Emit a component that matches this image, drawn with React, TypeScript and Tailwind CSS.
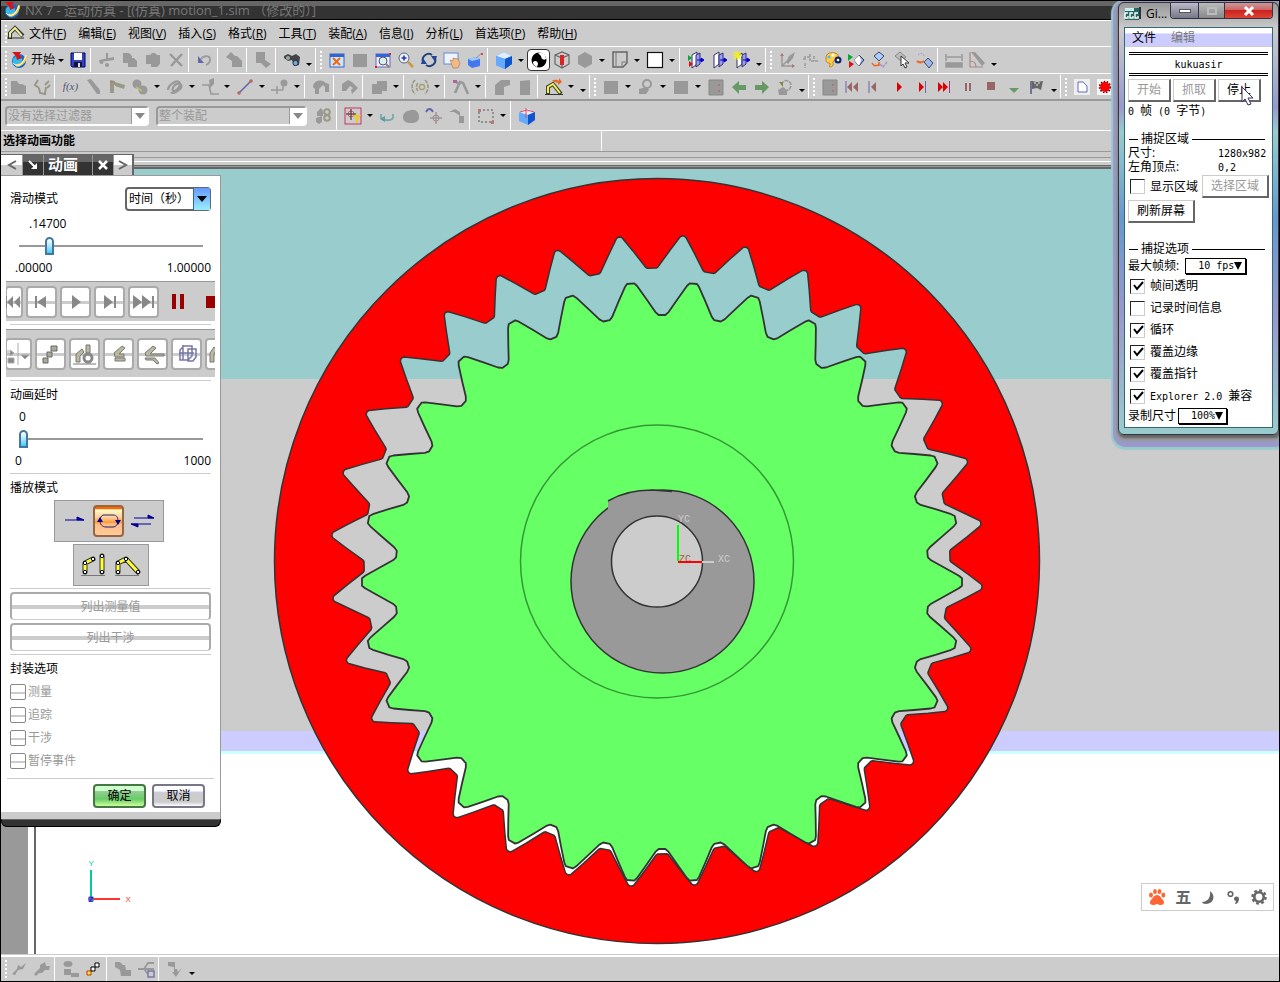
import React, { ReactNode } from "react";

const G = "#999999";

const icons: Record<string, ReactNode> = {
  nx: (
    <>
      <circle cx="9" cy="10" r="7" fill="#1a66cc" />
      <path d="M3 8c2-4 8-4 9 0s-1 6-3 8c-4 0-7-4-6-8z" fill="#33bbee" />
      <path d="M6 14c4 1 9-2 10-9" stroke="#ffcc33" strokeWidth="2.4" fill="none" />
      <path d="M3 12c2 3 7 3 9 0s4-6 4-8" stroke="#ffffff" strokeWidth="1" fill="none" />
      <path d="M2 1l9 0-2 3 3 3-5 2-1-4z" fill="#dd1111" />
    </>
  ),
  save: (
    <>
      <path d="M2 2h14v14H3l-1-1z" fill="#3344bb" stroke="#000066" />
      <rect x="5" y="2" width="8" height="7" fill="#fff" />
      <rect x="5" y="11" width="8" height="5" fill="#111144" />
      <rect x="9" y="12" width="2" height="4" fill="#ddd" />
    </>
  ),
  cut: (
    <>
      <path d="M1 9l15-3v3L2 11zM8 2h2v8H8z" fill={G} />
      <circle cx="3.500" cy="11" r="2" fill={G} />
      <circle cx="9" cy="14" r="2" fill={G} />
    </>
  ),
  copy: <path d="M2 2h6l3 3v2h2l3 3v6H7v-4H2z" fill={G} />,
  paste: <path d="M2 4h4l2-2h3l2 2h3v9l-3 3H7v-3H2z" fill={G} />,
  del: <path d="M3 3l12 12M15 3L4 15" stroke={G} strokeWidth="2.4" />,
  undo: (
    <>
      <path d="M5 8c3-4 9-4 9 1 0 3-2 4-4 5" stroke={G} strokeWidth="1.8" fill="none" />
      <path d="M2 5v7h6z" fill="#6666aa" />
    </>
  ),
  box1: <path d="M1 6l5-5 4 4h2l5 5v6H7v-6z" fill={G} />,
  box2: <path d="M2 1h9v8l6 4-5 4-5-5H2z" fill={G} />,
  bino: (
    <>
      <path d="M1 5l4-2 4 2 4-2 4 3-1 8-5 1-2-6-4 1-4-3z" fill="#444" />
      <circle cx="5" cy="7" r="2" fill="#99aaaa" />
      <circle cx="12.500" cy="12" r="2.600" fill="#77aacc" stroke="#223355" />
    </>
  ),
  fit: (
    <>
      <rect x="2" y="3" width="14" height="13" fill="#cce6ff" stroke="#3366cc" />
      <rect x="2" y="3" width="14" height="3" fill="#3366cc" />
      <path d="M5 7l7 7M12 7l-7 7" stroke="#ee6611" strokeWidth="2" />
    </>
  ),
  square: <rect x="2" y="3" width="14" height="13" fill={G} />,
  zoomBox: (
    <>
      <rect x="2" y="3" width="14" height="13" fill="#eef" stroke="#6666cc" />
      <rect x="2" y="3" width="14" height="3" fill="#3366dd" />
      <circle cx="9" cy="10" r="4" fill="#ddeeee" stroke="#556" />
      <path d="M12 13l3 3" stroke="#886" strokeWidth="2" />
      <path d="M15 2h2v2h-2zM1 15h2v2H1z" fill="#d22" />
    </>
  ),
  zoom: (
    <>
      <circle cx="7" cy="7" r="5" fill="#eef4ff" stroke="#556677" />
      <path d="M4.500 7h5M7 4.500v5" stroke="#2233bb" strokeWidth="1.600" />
      <path d="M11 11l5 5" stroke="#cc9944" strokeWidth="2.600" />
    </>
  ),
  rotate: (
    <>
      <path d="M3 11a6 6 0 0 1 9-7M15 7a6 6 0 0 1-9 7" stroke="#224477" strokeWidth="2" fill="none" />
      <path d="M11 5h6l-2 6zM7 13H1l2-6z" fill="#224499" />
    </>
  ),
  pan: (
    <>
      <rect x="1" y="2" width="14" height="11" fill="#eef4ff" stroke="#6688cc" />
      <path d="M7 9l3 1V7l5 1 2 4-2 5h-5z" fill="#eebb88" stroke="#aa7744" strokeWidth=".6" />
    </>
  ),
  ortho: (
    <>
      <path d="M2 8l8-2 4 2v7l-8 2-4-3z" fill="#4477ee" />
      <path d="M2 8l8-2 4 2-8 2z" fill="#99ccff" />
      <path d="M10 7l6-5" stroke="#aa8888" />
      <circle cx="16" cy="3" r="1" fill="#d22" />
    </>
  ),
  cube: (
    <>
      <path d="M1 5l8-4 8 4v8l-7 5-9-4z" fill="#3388ff" />
      <path d="M1 5l8-4 8 4-7 3z" fill="#ddeeff" />
      <path d="M10 8l7-3v8l-7 5z" fill="#1155cc" />
      <path d="M1 5l9 3v10l-9-4z" fill="#66aaff" />
    </>
  ),
  ball: (
    <>
      <circle cx="9" cy="9" r="7.500" fill="#000" />
      <path d="M8 2c5-1 8 2 8 6-3 2-5-1-5-3zM3 11c2-2 5-1 5 2l-1 3c-3-1-4-3-4-5z" fill="#fff" />
    </>
  ),
  section: (
    <>
      <path d="M2 4l7-3 7 3v9l-7 4-7-4zM2 4l7 3 7-3M9 7v10" fill="none" stroke="#666" strokeWidth="1.200" />
      <path d="M7 4h4v10H7z" fill="#dd2222" />
    </>
  ),
  hex: <path d="M2 5l7-4 7 4v8l-7 4-7-4z" fill={G} />,
  sheet: (
    <>
      <path d="M2 1h14v11l-4 4H2z" fill="#ccc" stroke="#666" strokeWidth="1.500" />
      <path d="M5 1v15M16 11h-5v5" stroke="#777" fill="none" />
    </>
  ),
  white: <rect x="1.500" y="1.500" width="15" height="15" fill="#fff" stroke="#111" strokeWidth="1.200" />,
  door: (
    <>
      <path d="M4 4l5-3v12l-5 4z" fill="#fff" stroke="#333366" />
      <path d="M9 4l4-2v11l-4 3z" fill="#9999ff" stroke="#333366" />
      <path d="M10 9h5M14 7l3 2-3 2z" fill="#0000cc" stroke="#0000cc" />
    </>
  ),
  doorRed: (
    <>
      <path d="M5 4l5-3v12l-5 4z" fill="#fff" stroke="#333366" />
      <path d="M9 4l4-2v11l-4 3z" fill="#9999ff" stroke="#333366" />
      <path d="M10 9h5M14 7l3 2-3 2z" fill="#0000cc" stroke="#0000cc" />
      <path d="M1 4l4 3-4 3z" fill="#00aa33" />
      <path d="M2 10l4 3-4 3z" fill="#dd1111" />
    </>
  ),
  doorStar: (
    <>
      <path d="M4 5l5-3v11l-5 4z" fill="#fff" stroke="#333366" />
      <path d="M9 4l4-2v11l-4 3z" fill="#9999ff" stroke="#333366" />
      <path d="M10 9h5M14 7l3 2-3 2z" fill="#0000cc" stroke="#0000cc" />
      <path d="M1 1l7 7M8 1L1 8M4.500 0v9M0 4.500h9" stroke="#eeee22" strokeWidth="1.500" />
    </>
  ),
  csys1: (
    <>
      <path d="M4 3v12h12M4 15l5-5" stroke={G} strokeWidth="1.500" fill="none" />
      <path d="M17 1l-2 6-5 6-2-2 3-6z" fill={G} />
      <path d="M2 5l2-3 2 3zM14 13l3 2-3 2z" fill="#aa7777" />
    </>
  ),
  csys2: <path d="M4 12v5M2 8h4M9 3v7h8M9 6H3M13 5v5" stroke={G} strokeWidth="1.500" strokeDasharray="3 1" fill="none" />,
  palette: (
    <>
      <path d="M2 7c0-5 5-6 9-5s4 4 2 6-5 2-4 4-1 4-3 4 2-4-1-4-3-2-3-5z" fill="#ffcc44" stroke="#aa6600" strokeWidth=".7" />
      <circle cx="5" cy="6" r="1.500" fill="#44bbff" />
      <circle cx="9" cy="4" r="1.500" fill="#fff" />
      <circle cx="14" cy="9" r="3.500" fill="#112266" />
      <circle cx="14" cy="9" r="1.300" fill="#fff" />
    </>
  ),
  showHide: (
    <>
      <path d="M1 3l5 3-5 4z" fill="#00aa33" />
      <path d="M2 10l5 3-5 4z" fill="#dd1111" />
      <path d="M7 9l5-5 5 5-5 6z" fill="#99aaee" stroke="#335" />
      <path d="M7 9l5-5 2 5-2 6z" fill="#fff" />
    </>
  ),
  hide: (
    <>
      <path d="M4 5l5-4 5 4-5 5z" fill="#aaccff" stroke="#446" />
      <path d="M2 12c2 4 5 3 7 1M9 11v4" stroke="#ee6622" strokeWidth="1.500" fill="none" />
      <path d="M10 13l3 3 4-5" stroke="#9999cc" strokeWidth="1.500" fill="none" strokeDasharray="3 1" />
    </>
  ),
  pick: (
    <>
      <path d="M2 5l5-4 6 5-5 4z" fill="#bbb" stroke="#888" />
      <path d="M8 5v10l2-2 2 4 2-1-2-4h4z" fill="#fff" stroke="#333" />
    </>
  ),
  eye: (
    <>
      <path d="M2 4l3-2 4 3" stroke="#99c" fill="none" strokeDasharray="2 1" />
      <path d="M8 11l4-4 5 5-4 5z" fill="#99bbee" stroke="#446" />
      <path d="M1 10c2 2 4 2 7 0" stroke="#ee6622" strokeWidth="2" fill="none" />
    </>
  ),
  measure: <path d="M1 3v7M17 3v7M2 6h14M1 12h16v4H1z" stroke={G} strokeWidth="1.500" fill={G} />,
  angle: (
    <>
      <path d="M2 1v15h13M2 10c4 0 6 2 6 6" stroke="#aa8888" strokeWidth="1.200" fill="none" />
      <path d="M3 1h4l10 11-3 3z" fill={G} />
    </>
  ),
  part: <path d="M1 3h6l2 3h3l4 2v8H1z" fill={G} />,
  sketch: <path d="M5 2L2 7l4 3M6 10l1 5 5 1 1-7M12 7l4-4M14 10l3-3" stroke="#999988" strokeWidth="2" fill="none" />,
  link: <path d="M2 2l4-1 9 11v4h-3z" fill={G} />,
  joint: (
    <>
      <path d="M2 15V2l5 1v4H6v8zM7 4l10 3-1 4L7 8z" fill="#999988" />
      <circle cx="4" cy="4" r="1.200" fill="#bb7777" />
    </>
  ),
  gears: (
    <>
      <circle cx="6" cy="6" r="4.500" fill={G} />
      <circle cx="12" cy="12" r="4.500" fill={G} />
      <path d="M5 9l6 4" stroke="#bbbb77" strokeWidth="2" />
    </>
  ),
  spring: <path d="M2 12c0-5 8-10 11-8s-2 9-5 9-1-6 3-7 6 2 3 5-8 5-9 3" stroke={G} strokeWidth="2.200" fill="none" />,
  damper: (
    <>
      <path d="M1 7h7l2 9h8M9 8l2-4" stroke={G} strokeWidth="1.600" fill="none" />
      <path d="M8 2l5-2v6l-4 4z" fill={G} />
    </>
  ),
  vector: (
    <>
      <path d="M3 15L15 3" stroke="#6666aa" strokeWidth="1.600" />
      <circle cx="3" cy="15" r="1.800" fill="#bb6666" />
      <circle cx="15" cy="3" r="1.800" fill="#bb6666" />
    </>
  ),
  forceBall: (
    <>
      <path d="M0 12h12M6 8v8M12 12V6" stroke={G} strokeWidth="1.500" />
      <circle cx="13" cy="5" r="3.500" fill={G} />
    </>
  ),
  arc: <path d="M1 9c0-6 8-9 13-4l3 1v8h-4V9l-2-2-4 4v5H3v-5z" fill={G} />,
  loop: <path d="M1 6l6-4 4 2 6 6-6 6-1-4 2-2-3-2-4 5H1z" fill={G} />,
  blocks: <path d="M2 6h5V3h10v10h-5v3H2z" fill={G} />,
  wave: (
    <>
      <path d="M4 2C0 6 0 12 4 16M7 5c-2 2-2 6 0 8M14 2c4 4 4 10 0 14" stroke="#999988" strokeWidth="1.600" fill="none" strokeDasharray="4 1" />
      <circle cx="11" cy="9" r="2.600" stroke="#aaa077" strokeWidth="1.500" fill="none" />
    </>
  ),
  graph: (
    <>
      <path d="M3 15L8 4l3 1 5 11M3 3l4 3" stroke={G} strokeWidth="2.600" fill="none" />
      <path d="M1 2h4v3H1z" fill="#aa6699" />
    </>
  ),
  corner: <path d="M2 7l6-5h9v5l-6 2v8H2z" fill={G} />,
  plate: <path d="M4 3l10-1v15H4z" fill={G} />,
  anim: (
    <>
      <path d="M3 16V9l5-3 8 10" stroke="#444422" strokeWidth="4" fill="none" />
      <path d="M3 15V9l5-3 7 9" stroke="#eeee66" strokeWidth="2" fill="none" />
      <path d="M7 3c3-2 5-1 7 0V0l3 4-4 3V5z" fill="#ee6622" />
      <path d="M0 16.500h18" stroke="#333" />
    </>
  ),
  gray3: (
    <>
      <path d="M2 2h14v15H2z" fill={G} stroke="#888" />
      <path d="M11 6h2v2h-2zM11 12h2v2h-2z" fill="#aa7777" />
    </>
  ),
  magnet: (
    <>
      <circle cx="10" cy="6" r="4" stroke={G} fill="none" strokeWidth="2" />
      <path d="M2 11l8-2 2 3-3 4H2z" fill={G} />
    </>
  ),
  left: <path d="M2 9l7-6v4h7v5H9v4z" fill="#669966" />,
  right: <path d="M16 9L9 3v4H2v5h7v4z" fill="#669966" />,
  refresh: (
    <>
      <path d="M6 7c0-7 10-5 9 1-1 3-2 4-5 5" stroke={G} strokeWidth="1.500" fill="none" strokeDasharray="4 1" />
      <path d="M2 12l5-3 4 3v5H3z" fill={G} />
      <path d="M3 4h4v5z" fill="#888844" />
    </>
  ),
  first: (
    <>
      <path d="M2 3v12" stroke="#6666aa" />
      <path d="M3 9l5-5v10zM9 9l5-5v10z" fill="#996666" />
    </>
  ),
  prev: (
    <>
      <path d="M2 3v12" stroke="#6666aa" />
      <path d="M4 9l5-5v10z" fill="#996666" />
    </>
  ),
  play: <path d="M7 4l5 5-5 5z" fill="#dd0000" />,
  next: (
    <>
      <path d="M6 4l5 5-5 5z" fill="#dd0000" />
      <path d="M12.500 3v12" stroke="#6666aa" />
    </>
  ),
  last: (
    <>
      <path d="M2 4l5 5-5 5zM7 4l5 5-5 5z" fill="#dd0000" />
      <path d="M13.500 3v12" stroke="#aa3366" />
    </>
  ),
  pause: <path d="M6 5h2v8H6zM10 5h2v8h-2z" fill="#996666" />,
  stop: <path d="M5 4h8v8H5z" fill="#996666" />,
  down: <path d="M4 10h10l-5 5z" fill="#669966" />,
  flag: (
    <>
      <path d="M3 3v13" stroke="#555588" strokeWidth="1.500" />
      <path d="M4 3l5 1 6-1-2 9-4-2-5 1z" fill="#666" />
      <path d="M6 4h2v2H6zM10 4h2v2h-2zM8 6h2v2H8z" fill="#aaa" />
    </>
  ),
  newDoc: (
    <>
      <path d="M1 1h16v16H1z" fill="#eee" />
      <path d="M5 4h5l4 4v6H5z" fill="#fff" stroke="#6666bb" />
    </>
  ),
  record: (
    <>
      <path d="M1 1h16v16H1z" fill="#f4f4f4" />
      <circle cx="9" cy="9" r="5" fill="#f00" />
      <circle cx="9" cy="9" r="5.500" fill="none" stroke="#660000" strokeWidth="1.500" strokeDasharray="1.500 1.500" />
    </>
  ),
  assembly: (
    <>
      <path d="M1 11l6-2v6l-3 2-3-2z" fill={G} />
      <path d="M2 5l4-4 2 3v5H2z" fill={G} />
      <circle cx="12" cy="5" r="2.800" stroke="#999988" strokeWidth="2" fill="none" />
      <circle cx="12" cy="11" r="2.800" stroke="#999988" strokeWidth="2" fill="none" />
    </>
  ),
  filter: (
    <>
      <rect x="1" y="1" width="16" height="16" fill="#ccc" stroke="#cc3366" />
      <circle cx="7" cy="7" r="3" fill="none" stroke="#cc6666" />
      <path d="M7 2v11M2 7h10" stroke="#442222" />
      <path d="M9 8h8l-3 4v4h-2v-4z" fill="#eecc22" />
    </>
  ),
  swap: (
    <>
      <path d="M2 7v4c3 3 10 3 12 0V7" stroke="#77aaaa" strokeWidth="1.800" fill="none" />
      <path d="M1 12l5-3v6z" fill="#669999" />
    </>
  ),
  blob: <path d="M1 10c0-4 3-6 8-7s8 3 8 7-3 6-8 6-8-2-8-6z" fill={G} />,
  point: (
    <>
      <path d="M1 5c2-4 5-4 7 0" stroke="#6666aa" strokeWidth="1.800" fill="none" />
      <path d="M11 5v12M5 11h12" stroke={G} strokeWidth="1.500" />
      <circle cx="11" cy="11" r="3" stroke="#aa8888" fill="none" />
    </>
  ),
  hook: <path d="M1 5l6-3 5 3v4h4v7h-5V8L6 5z" fill={G} />,
  marquee: (
    <>
      <rect x="2" y="3" width="14" height="12" stroke="#555" strokeDasharray="2 2" fill="none" />
      <path d="M1 2h3v3H1zM14 14h3v3h-3z" fill="#bb7777" />
    </>
  ),
  cubeRed: (
    <>
      <path d="M1 5l8-4 8 4v8l-7 5-9-4z" fill="#66aaff" />
      <path d="M1 5l8-4 8 4-7 3z" fill="#ddeeff" />
      <path d="M10 8l7-3v8l-7 5z" fill="#1155cc" />
      <path d="M8 1v10M2 5l7-2 7 2" stroke="#ee4444" fill="none" />
    </>
  ),
  wrench: <path d="M2 14l5-5 1-4 3 2 5-4-3 6-5 1-3 5z" fill={G} />,
  spanner: <path d="M1 14l6-6V5l5-3 1 4h4l-1 4h-4l-3 3H6l-3 3z" fill={G} />,
  tree: (
    <>
      <ellipse cx="6" cy="4" rx="4.500" ry="3" fill={G} />
      <path d="M2 9h7v4h8v4H9v-2H2z" fill={G} />
    </>
  ),
  steps: (
    <>
      <path d="M2 11h4v4H2z" fill="#ffee33" stroke="#cc3300" />
      <path d="M6 7h4v4H6z" fill="#fff" stroke="#000" />
      <path d="M10 3h4v4h-4z" fill="#fff" stroke="#000" />
    </>
  ),
  folder: <path d="M1 2h5l3 3h2l1 5h5v6H7l-1-6-5-3z" fill={G} />,
  nodes: (
    <>
      <path d="M1 9h6M7 9l4-6h6M7 9h10M7 9l4 5" stroke={G} strokeWidth="1.800" fill="none" />
      <path d="M11 11h6v6h-6z" fill="#ccc" stroke="#7777aa" strokeWidth="1.500" />
    </>
  ),
  check: <path d="M2 2h7v7h2l1 3 4-4-6 9-4-5h2V7L2 6z" fill={G} />,
};

function Icon({ name }: { name: string }) {
  return (
    <svg viewBox="0 0 18 18" className="size-[18px] shrink-0" aria-hidden="true">
      {icons[name]}
    </svg>
  );
}

/* "|" separator, "v" drop-down arrow, "_" overflow arrow, ":" group break with grip, anything else an icon name */
function Tools({ items, pressed }: { items: string; pressed?: string }) {
  return (
    <>
      {items.split(" ").map((t, i) => {
        if (t === "|") return <span key={i} className="mr-1 ml-px h-full w-px shrink-0 bg-white" />;
        if (t === ":")
          return (
            <span key={i} className="flex h-full w-[10px] shrink-0 items-center border-l border-white pl-1">
              <span className="h-[18px] border-l-2 border-dotted border-white" />
            </span>
          );
        if (t === "v" || t === "_")
          return (
            <button key={i} aria-label="更多" className={"flex h-full w-3 shrink-0 items-center justify-center " + (t === "_" ? "pt-2" : "")}>
              <span className="border-x-3 border-t-3 border-x-transparent border-t-black" />
            </button>
          );
        return (
          <button
            key={i}
            aria-label={t}
            className={
              "flex h-[22px] w-[23px] shrink-0 items-center justify-center " +
              (t === pressed ? "rounded-sm border border-[#333333] bg-white" : "")
            }
          >
            <Icon name={t} />
          </button>
        );
      })}
    </>
  );
}

function Grip() {
  return <span className="ml-1 h-[18px] shrink-0 border-l-2 border-dotted border-white" />;
}

const menus: [string, string][] = [
  ["文件", "F"], ["编辑", "E"], ["视图", "V"], ["插入", "S"], ["格式", "R"], ["工具", "T"],
  ["装配", "A"], ["信息", "I"], ["分析", "L"], ["首选项", "P"], ["帮助", "H"],
];

function FilterSelect({ label, width }: { label: string; width: string }) {
  return (
    <span className={"relative flex h-5 shrink-0 rounded-sm border-2 border-[#999999] border-b-white border-r-white " + width}>
      <select aria-label={label} disabled className="w-full appearance-none bg-transparent px-px text-[12px] leading-4 text-[#999999] opacity-100">
        <option>{label}</option>
      </select>
      <span className="pointer-events-none absolute right-0 top-0 flex h-4 w-4 items-center justify-center border-l border-[#999999] bg-white">
        <span className="border-x-5 border-t-6 border-x-transparent border-t-[#888888]" />
      </span>
    </span>
  );
}

type P = [number, number];
function polar(cx: number, cy: number, r: number, deg: number): P {
  const a = (deg * Math.PI) / 180;
  return [cx + r * Math.sin(a), cy - r * Math.cos(a)];
}
function toothPath(cx: number, cy: number, n: number, start: number, outer: P[], inner: P[]) {
  const step = 360 / n;
  const pts: P[] = [];
  for (let i = 0; i < n; i++) {
    const a = start + i * step;
    outer.forEach(([d, r]) => pts.push(polar(cx, cy, r, a + d)));
    inner.forEach(([d, r]) => pts.push(polar(cx, cy, r, a + step / 2 + d)));
  }
  return "M" + pts.map((p) => p[0].toFixed(1) + " " + p[1].toFixed(1)).join("L") + "Z";
}
const ringTeeth = toothPath(657, 561, 32, 4.6,
  [[-2.2, 311], [-0.5, 325], [-0.2, 326], [0.2, 326], [0.5, 325], [2.2, 311]],
  [[-1.2, 294], [-0.9, 293], [0.9, 293], [1.2, 294]]);
const gearTeeth = toothPath(662, 582, 30, 6,
  [[-2.9, 283], [-1.2, 297], [-0.7, 300], [0.7, 300], [1.2, 297], [2.9, 283]],
  [[-1.4, 270], [-0.7, 267], [0.7, 267], [1.4, 270]]);

function Model() {
  return (
    <svg viewBox="1 169 1278 785" className="absolute inset-0 h-full w-full" role="img" aria-label="齿轮机构">
      <path fillRule="evenodd" d={"M274.500 561a382.500 382.500 0 1 0 765 0a382.500 382.500 0 1 0 -765 0Z" + ringTeeth} fill="#ff0000" stroke="#333333" strokeWidth="1.500" />
      <path d={gearTeeth} fill="#66ff66" stroke="#333333" strokeWidth="1.800" strokeLinejoin="round" />
      <circle cx="657" cy="561.500" r="136.500" fill="none" stroke="#339933" strokeWidth="1.500" />
      <circle cx="662.500" cy="581.500" r="91.500" fill="#999999" stroke="#333333" strokeWidth="1.500" />
      <path d="M608 510V501Q626 490 652 490L672 491.500V500L640 530Z" fill="#999999" />
      <path d="M608 501Q626 490 652 490L672 491.500" fill="none" stroke="#333333" strokeWidth="1.500" />
      <circle cx="657" cy="561.500" r="45.500" fill="#cccccc" stroke="#333333" strokeWidth="1.500" />
      <g fontFamily="'Liberation Mono', monospace" fontSize="10">
        <text x="678" y="522" fill="#cccccc">YC</text>
        <text x="679" y="562" fill="#996633">ZC</text>
        <text x="718" y="562" fill="#cccccc">XC</text>
      </g>
      <path d="M678 525v36" stroke="#00ff00" strokeWidth="2" />
      <path d="M678 562h24" stroke="#ff0000" strokeWidth="2" />
      <path d="M702 562h12" stroke="#cccccc" strokeWidth="2" />
      <path d="M91 870v28" stroke="#00cc99" strokeWidth="2" />
      <path d="M91 899h29" stroke="#ff3333" strokeWidth="2" />
      <circle cx="91" cy="899" r="3" fill="#6666aa" />
      <g fontFamily="'Liberation Sans', sans-serif" fontSize="8">
        <text x="88.500" y="866" fill="#00cc99">Y</text>
        <text x="88.500" y="902" fill="#0000ff">Z</text>
        <text x="125.500" y="902" fill="#ff3333">X</text>
      </g>
    </svg>
  );
}

const sliderCls =
  "h-[18px] w-full appearance-none bg-[linear-gradient(#999999,#999999)] bg-[length:100%_2px] bg-center bg-no-repeat " +
  "[&::-webkit-slider-thumb]:h-[18px] [&::-webkit-slider-thumb]:w-[9px] [&::-webkit-slider-thumb]:appearance-none " +
  "[&::-webkit-slider-thumb]:rounded-t-full [&::-webkit-slider-thumb]:border-2 [&::-webkit-slider-thumb]:border-[#447799] " +
  "[&::-webkit-slider-thumb]:bg-linear-to-b [&::-webkit-slider-thumb]:from-white [&::-webkit-slider-thumb]:to-[#33ccff]";

function Slider({ label, value, min, max, now, pad }: { label: string; value: number; min: string; max: string; now: string; pad: string }) {
  return (
    <div className="pl-[5px]">
      <div className={"h-[14px] leading-[14px] " + pad}>{now}</div>
      <div className="mt-[6px] flex pl-1 pr-2">
        <input type="range" aria-label={label} min={0} max={1000} defaultValue={value} className={sliderCls} />
      </div>
      <div className="mt-[6px] flex h-[14px] justify-between leading-[14px]">
        <span>{min}</span>
        <span>{max}</span>
      </div>
    </div>
  );
}

function PanelButton({ label, children, cut }: { label: string; children: ReactNode; cut?: string }) {
  return (
    <button
      aria-label={label}
      className={
        "flex h-8 shrink-0 items-center justify-center rounded-sm border-2 border-[#aaaaaa] bg-[linear-gradient(#ffffff_46%,#cccccc_46%,#cccccc_58%,#ffffff_58%)] " +
        (cut ?? "w-[31px]")
      }
    >
      <svg viewBox="0 0 26 26" className="size-[26px] shrink-0" aria-hidden="true">
        {children}
      </svg>
    </button>
  );
}

const Rule = ({ m }: { m: string }) => <div className={"h-px shrink-0 bg-[#cccccc] " + m} />;

function AnimationPanel() {
  return (
    <section className="absolute left-0 top-[153px] w-[220px] text-[12px] text-black">
      <header className="flex h-[21px] w-[133px] border-r-2 border-t border-[#666666] text-white">
        <button aria-label="上一个" className="flex w-[21px] items-center justify-center bg-[linear-gradient(#ffffff_50%,#cccccc_50%)]">
          <svg viewBox="0 0 12 12" className="size-3"><path d="M10 2L3 6l7 4" fill="none" stroke="#666" strokeWidth="2" /></svg>
        </button>
        <button aria-label="停靠" className="flex w-[22px] items-center justify-center border-x border-[#999999] bg-[linear-gradient(#666666_35%,#333333_35%)]">
          <svg viewBox="0 0 12 12" className="size-3"><path d="M2 2l6 6" stroke="#fff" strokeWidth="2" /><path d="M10 4v6H4z" fill="#fff" /></svg>
        </button>
        <h2 className="w-12 bg-[linear-gradient(#666666_35%,#333333_35%)] pl-1 text-[15px] font-bold leading-[19px]">动画</h2>
        <button aria-label="关闭" className="flex w-[22px] items-center justify-center border-x border-[#999999] bg-[linear-gradient(#666666_35%,#333333_35%)]">
          <svg viewBox="0 0 12 12" className="size-3"><path d="M2 2l8 8M10 2l-8 8" stroke="#fff" strokeWidth="2.500" /></svg>
        </button>
        <button aria-label="下一个" className="flex flex-1 items-center justify-center bg-[linear-gradient(#ffffff_50%,#cccccc_50%)]">
          <svg viewBox="0 0 12 12" className="size-3"><path d="M2 2l7 4-7 4" fill="none" stroke="#666" strokeWidth="2" /></svg>
        </button>
      </header>

      <div className="flex flex-col border-r border-t border-[#999999] bg-white pb-1 pt-[11px]">
        <div className="flex h-6 items-center justify-between px-[9px]">
          <label htmlFor="slideMode">滑动模式</label>
          <span className="relative">
            <select id="slideMode" className="block h-6 w-[86px] appearance-none rounded-sm border-2 border-[#666666] bg-white pl-[2px] text-[12px]">
              <option>时间（秒）</option>
            </select>
            <span className="pointer-events-none absolute right-px top-px flex h-[22px] w-[17px] items-center justify-center border-l border-[#336699] bg-linear-to-b from-[#6699ff] to-[#99eeff]">
              <span className="border-x-5 border-t-6 border-x-transparent border-t-black" />
            </span>
          </span>
        </div>
        <div className="mt-[6px] px-[9px]">
          <Slider label="时间" value={147} now=".14700" min=".00000" max="1.00000" pad="pl-[14px]" />
        </div>
        <div className="mx-[5px] mt-[6px] flex h-10 items-center justify-start gap-[3px] overflow-hidden border-t border-[#999999] bg-[#cccccc]">
          <PanelButton label="首帧" cut="w-[18px] -ml-[1px]"><path d="M4 7h2v12H4zM6 13l6-6v12zM13 13l6-6v12z" fill="#888" /></PanelButton>
          <PanelButton label="上一帧"><path d="M6 7h2v12H6zM8 13l9-6v12z" fill="#888" /></PanelButton>
          <PanelButton label="播放"><path d="M9 6l9 7-9 7z" fill="#888" /></PanelButton>
          <PanelButton label="下一帧"><path d="M7 6l9 7-9 7zM17 7h2v12h-2z" fill="#888" /></PanelButton>
          <PanelButton label="末帧"><path d="M2 6l9 7-9 7zM11 6l9 7-9 7zM21 7h2v12h-2z" fill="#888" /></PanelButton>
          <button aria-label="暂停" className="flex w-[31px] shrink-0 justify-center gap-1">
            <span className="h-[15px] w-1 bg-[#990000]" />
            <span className="h-[15px] w-1 bg-[#990000]" />
          </button>
          <button aria-label="停止" className="ml-[10px] h-3 w-3 shrink-0 bg-[#990000]" />
        </div>
        <Rule m="mx-[9px] mt-[3px]" />
        <div className="mx-[5px] mt-1 flex h-12 items-center gap-[3px] overflow-hidden border-t border-[#999999] bg-[#cccccc]">
          <PanelButton label="捕捉" cut="w-[27px] -ml-[1px]"><path d="M2 9v5M4 9l4 3-4 3zM2 17h6v5H2zM12 2v22M15 14h8l-4 4z" fill="#888" stroke="#aaa" /></PanelButton>
          <PanelButton label="步进"><path d="M5 17h5v5H5zM9 11h5v5H9zM13 5h6v5h-6z" fill="#aaaa99" stroke="#666" /></PanelButton>
          <PanelButton label="设计位置"><path d="M4 21v-8l6-5 2 3-4 4v6zM14 4h4v8h-4z" fill="#bbb8a0" stroke="#777" /><circle cx="16" cy="17" r="4" fill="none" stroke="#888" strokeWidth="3" /><path d="M1 23h23" stroke="#777" /></PanelButton>
          <PanelButton label="装配位置"><path d="M8 12l8-7 3 2-6 6h5v3H9zM9 17h10v3H9z" fill="#bbb8a0" stroke="#777" /></PanelButton>
          <PanelButton label="运动包络"><path d="M5 12l8-7 3 2-6 6h14v2H6zM5 17h10l4 5-2 1-4-4H6z" fill="#bbb8a0" stroke="#777" /></PanelButton>
          <PanelButton label="追踪"><path d="M6 9l4-4h8v10l-4 4H6zM9 4v15M5 12h15M14 8v12h5l3-4V8z" fill="none" stroke="#7777aa" strokeWidth="1.500" /></PanelButton>
          <PanelButton label="干涉"><path d="M2 21v-9l4-6 3 2-3 5v8z" fill="#bbb8a0" stroke="#777" /></PanelButton>
        </div>
        <Rule m="mx-[9px] mt-[3px]" />
        <h3 className="mt-[5px] pl-[9px] leading-[18px]">动画延时</h3>
        <div className="mt-[6px] px-[9px]">
          <Slider label="动画延时" value={0} now="0" min="0" max="1000" pad="pl-1" />
        </div>
        <Rule m="mx-[9px] mt-[5px]" />
        <h3 className="mt-[5px] pl-[9px] leading-[18px]">播放模式</h3>
        <div className="mt-[3px] flex h-[42px] w-[110px] shrink-0 items-center justify-center gap-[3px] self-center -ml-1 border border-[#999999] bg-[#cccccc]">
          <button aria-label="单次" className="flex h-8 w-[31px] items-center justify-center">
            <svg viewBox="0 0 22 18" className="h-[18px] w-[22px]"><path d="M1 8h19M13 8V5l7 3z" fill="#000099" stroke="#000099" /></svg>
          </button>
          <button aria-label="循环" className="flex h-8 w-[31px] items-center justify-center rounded-sm border-2 border-[#996644] bg-[linear-gradient(#ff6600_6%,#ffffcc_10%,#ffcc99_38%,#ff9933_55%,#ffbb88_60%,#ffcc99)]">
            <svg viewBox="0 0 24 18" className="h-[18px] w-6"><path d="M6 3h10c4 0 5 3 5 6s-2 6-5 6H9c-4 0-6-3-6-6s1-5 3-6z" fill="none" stroke="#222266" /><path d="M18 8h6l-3 5zM0 10l3-5 3 5z" fill="#000099" /></svg>
          </button>
          <button aria-label="往返" className="flex h-8 w-[31px] items-center justify-center">
            <svg viewBox="0 0 26 18" className="h-[18px] w-[26px]"><path d="M4 6h20M18 6V3l6 3zM21 12H1M8 12v3l-7-3z" fill="#000099" stroke="#000099" /></svg>
          </button>
        </div>
        <div className="mt-[2px] flex h-[42px] w-[76px] shrink-0 items-center justify-center self-center border border-[#999999] bg-[#cccccc]">
          <svg viewBox="0 0 64 28" className="h-7 w-16" role="img" aria-label="连杆">
            <path d="M6 21V12l8-4M23 21V5M39 21V12l8-4 12 13" stroke="#333" strokeWidth="5" fill="none" strokeLinecap="round" strokeLinejoin="round" />
            <path d="M6 21V12l8-4M23 21V5M39 21V12l8-4 12 13" stroke="#ffff33" strokeWidth="3" fill="none" strokeLinecap="round" strokeLinejoin="round" />
            <g fill="#fff" stroke="#000">
              {[[6, 21], [6, 12], [14, 8], [23, 21], [23, 5], [39, 21], [39, 12], [47, 8], [59, 21]].map(([x, y]) => (
                <circle key={x + "," + y} cx={x} cy={y} r="1.700" />
              ))}
            </g>
            <path d="M2 24.500h24M36 24.500h24" stroke="#777" />
          </svg>
        </div>
        <Rule m="mx-[9px] mt-[2px]" />
        <div className="mx-[9px] mt-[3px] flex flex-col gap-[3px]">
          {["列出测量值", "列出干涉"].map((t) => (
            <button key={t} disabled className="h-7 rounded-sm border-2 border-b border-[#aaaaaa] border-b-[#cccccc] bg-[linear-gradient(#ffffff_46%,#cccccc_46%,#cccccc_62%,#ffffff_62%)] text-[#999999]">
              {t}
            </button>
          ))}
        </div>
        <Rule m="mx-[9px] mt-[3px]" />
        <h3 className="mt-[5px] pl-[9px] leading-[18px]">封装选项</h3>
        <div className="mt-[2px] flex flex-col pl-[9px] text-[#999999]">
          {["测量", "追踪", "干涉", "暂停事件"].map((t) => (
            <label key={t} className="flex h-[23px] items-center gap-[2px]">
              <input type="checkbox" disabled className="size-4 appearance-none rounded-xs border border-[#888888] bg-[linear-gradient(#ffffff_50%,#cccccc_50%,#cccccc_65%,#ffffff_65%)]" />
              {t}
            </label>
          ))}
        </div>
        <Rule m="mx-[6px] mt-[6px]" />
        <div className="mt-[5px] flex justify-end gap-[6px] pr-[15px]">
          <button className="h-6 w-[53px] rounded-sm border-2 border-[#447744] bg-[linear-gradient(#ccffcc_25%,#99cc99_25%,#66cc66_65%,#ccff99)]">确定</button>
          <button className="h-6 w-[53px] rounded-sm border-2 border-[#777788] bg-[linear-gradient(#ffffff_25%,#ccccff_30%,#cccccc_35%,#cccccc_80%,#ffffff)]">取消</button>
        </div>
      </div>
      <footer className="border-r border-[#999999] bg-[#cccccc] pt-[7px]" />
      <div className="h-2 rounded-b-md border border-black border-t-[#666666] bg-[#333333]" />
    </section>
  );
}

const Num = ({ children }: { children: ReactNode }) => (
  <span className="font-['DejaVu_Sans_Mono',monospace] text-[10px]">{children}</span>
);

function GifButton({ children, off, w }: { children: ReactNode; off?: boolean; w: string }) {
  return (
    <button disabled={off} className={"block h-[23px] shrink-0 border border-b-2 border-r-2 border-[#cccccc] border-b-[#666666] border-r-[#666666] bg-white " + w + (off ? " text-[#999999]" : "")}>
      {children}
    </button>
  );
}

const boxCls = "size-[15px] appearance-none border border-[#cccccc] border-l-[#222222] border-t-[#222222] bg-white";

function Check({ label, on, h }: { label: ReactNode; on?: boolean; h: string }) {
  return (
    <label className={"relative flex items-center gap-[5px] pl-[2px] " + h}>
      <input type="checkbox" defaultChecked={on} className={boxCls} />
      {on && (
        <svg viewBox="0 0 12 12" className="pointer-events-none absolute left-1 size-3" aria-hidden="true">
          <path d="M2 5l3 4 6-7" fill="none" stroke="#000" strokeWidth="2" />
        </svg>
      )}
      {label}
    </label>
  );
}

function GroupTitle({ children }: { children: ReactNode }) {
  return (
    <div className="flex h-[14px] items-center gap-[3px] pl-px pr-1 before:h-px before:w-[9px] before:bg-black after:h-px after:flex-1 after:bg-black">
      {children}
    </div>
  );
}

function DropBox({ id, text, w }: { id: string; text: string; w: string }) {
  return (
    <span className={"relative " + w}>
      <select id={id} className="block h-4 w-full appearance-none border border-black bg-white pl-3 font-['DejaVu_Sans_Mono',monospace] text-[10px] leading-[14px] shadow-[1px_1px_0_#000]">
        <option>{text}</option>
      </select>
      <span className="pointer-events-none absolute right-1 top-1 border-x-4 border-t-8 border-x-transparent border-t-black" />
    </span>
  );
}

function GifWindow() {
  return (
    <section className="absolute right-0 top-px w-[161px] rounded-md border border-[#333344] bg-[linear-gradient(#999999,#cccccc_6%,#9999cc_24%,#99cccc_30%,#6699cc_50%,#9999cc_72%,#99cccc)] px-[5px] pb-[6px] text-[12px] text-black shadow-[1px_2px_2px_1px_#666666,1px_3px_2px_3px_#999999,2px_5px_1px_7px_#9999cc,2px_6px_1px_9px_#99cccc]">
      <header className="flex h-[24px] items-start">
        <svg viewBox="0 0 18 16" className="mt-[3px] h-4 w-[18px]" aria-hidden="true">
          <path d="M1 2h14v12H1z" fill="#226666" />
          <path d="M1 2h9v3H1z" fill="#cceeee" />
          <path d="M4 7H1v5h3v-2M9 7H6v5h3v-2M14 7h-3v5h3v-2" stroke="#fff" strokeWidth="1.400" fill="none" />
          <path d="M15 1h2v12h-2z" fill="#333" />
        </svg>
        <h2 className="ml-1 mt-[3px] leading-4">Gi...</h2>
        <div className="ml-auto flex h-4 overflow-hidden rounded-b-sm border border-t-0 border-[#333344]">
          <button aria-label="最小化" className="flex w-7 items-center justify-center border-r border-[#333344] bg-linear-to-b from-[#bbbbcc] to-[#777788]">
            <span className="h-1 w-3 border border-[#555555] bg-white" />
          </button>
          <button aria-label="最大化" className="flex w-[26px] items-center justify-center border-r border-[#333344] bg-linear-to-b from-[#bbbbbb] to-[#888888]">
            <span className="h-2 w-[10px] border-2 border-[#bbbbbb]" />
          </button>
          <button aria-label="关闭" className="flex w-[47px] items-center justify-center bg-[linear-gradient(#cc9999,#cc6666_45%,#cc2222_50%,#dd4433)]">
            <svg viewBox="0 0 12 12" className="size-3"><path d="M2 2l8 8M10 2l-8 8" stroke="#fff" strokeWidth="3" /></svg>
          </button>
        </div>
      </header>
      <div className="border border-[#336677] bg-white px-[3px] pb-[2px]">
        <nav className="-mx-[3px] flex h-[19px] items-center gap-[15px] border-b border-[#cccccc] bg-[linear-gradient(#ffffff_25%,#ccccff_35%)] px-[7px] leading-none">
          <a href="#file" className="pt-px">文件</a>
          <a href="#edit" className="pt-px text-[#777777]">编辑</a>
        </nav>
        <div className="mx-px mt-[5px] flex h-6 items-center justify-center border-y-3 border-double border-black">
          <Num>kukuasir</Num>
        </div>
        <div className="mt-[3px] flex gap-[2px]">
          <GifButton off w="w-[43px]">开始</GifButton>
          <GifButton off w="w-[43px]">抓取</GifButton>
          <GifButton w="w-[43px]">停止</GifButton>
        </div>
        <p className="h-[17px] leading-[17px]"><Num>0 </Num>帧<Num> (0 </Num>字节<Num>)</Num></p>
        <div className="mt-[13px]"><GroupTitle>捕捉区域</GroupTitle></div>
        <dl className="grid auto-rows-[14px] grid-cols-[90px_1fr] leading-[14px]">
          <dt>尺寸:</dt><dd><Num>1280x982</Num></dd>
          <dt>左角顶点:</dt><dd><Num>0,2</Num></dd>
        </dl>
        <div className="mt-px flex items-center gap-1">
          <Check label="显示区域" h="h-[23px]" />
          <GifButton off w="w-[67px]">选择区域</GifButton>
        </div>
        <div className="mt-[2px]"><GifButton w="w-[67px]">刷新屏幕</GifButton></div>
        <div className="mt-[19px]"><GroupTitle>捕捉选项</GroupTitle></div>
        <div className="mt-px flex h-[17px] items-center gap-[6px]">
          <label htmlFor="fps">最大帧频:</label>
          <DropBox id="fps" text="10 fps" w="w-[61px]" />
        </div>
        <div className="mt-px">
          <Check on h="h-[22px]" label="帧间透明" />
          <Check h="h-[22px]" label="记录时间信息" />
          <Check on h="h-[22px]" label="循环" />
          <Check on h="h-[22px]" label="覆盖边缘" />
          <Check on h="h-[22px]" label="覆盖指针" />
          <Check on h="h-[22px]" label={<span><Num>Explorer 2.0 </Num>兼容</span>} />
        </div>
        <div className="flex h-[18px] items-center gap-[2px]">
          <label htmlFor="size">录制尺寸</label>
          <DropBox id="size" text="100%" w="w-[49px]" />
        </div>
      </div>
      <svg viewBox="0 0 14 20" className="pointer-events-none absolute left-[122px] top-[83px] h-5 w-[14px]" aria-hidden="true">
        <path d="M1 1v15l3-3 3 6 3-1-3-6h5z" fill="#fff" stroke="#333366" />
      </svg>
    </section>
  );
}

function InputBar() {
  return (
    <div className="absolute bottom-[70px] right-[5px] flex h-7 w-[133px] items-center justify-between border border-[#cccccc] bg-white px-[6px] text-[#666666]">
      <button aria-label="输入法">
        <svg viewBox="0 0 18 18" className="size-[18px]" fill="#ff6633">
          <ellipse cx="3" cy="7" rx="2" ry="2.500" /><ellipse cx="7" cy="3.500" rx="1.900" ry="2.500" />
          <ellipse cx="11.500" cy="3.500" rx="1.900" ry="2.500" /><ellipse cx="15.300" cy="7" rx="2" ry="2.500" />
          <path d="M9 7c3 0 4 3 6 5s1 5-2 5-3-1-4-1-1 1-4 1-4-3-2-5 3-5 6-5z" />
        </svg>
      </button>
      <button className="text-[16px] font-bold leading-none">五</button>
      <button aria-label="半角">
        <svg viewBox="0 0 16 16" className="size-4" fill="currentColor"><path d="M10 2c6 4 4 13-4 13-2 0-4-1-4-2 5 0 9-4 8-11z" /></svg>
      </button>
      <button aria-label="标点">
        <svg viewBox="0 0 16 16" className="size-4"><circle cx="4.500" cy="5" r="2.300" fill="none" stroke="currentColor" strokeWidth="1.600" /><path d="M8 10a2.500 2.500 0 1 1 5 0c0 3-2 5-4 5l1-3c-1 0-2-1-2-2z" fill="currentColor" /></svg>
      </button>
      <button aria-label="设置">
        <svg viewBox="0 0 18 18" className="size-4"><circle cx="9" cy="9" r="7.500" fill="none" stroke="currentColor" strokeWidth="2.500" strokeDasharray="3.200 2.690" /><circle cx="9" cy="9" r="5.300" fill="none" stroke="currentColor" strokeWidth="3" /></svg>
      </button>
    </div>
  );
}

export default function App() {
  return (
    <div className="relative flex min-h-screen flex-col overflow-hidden border border-black bg-[#cccccc] font-['Open_Sans','Noto_Sans_CJK_SC',sans-serif] text-[12px] text-black">
      <header className="flex h-[19px] shrink-0 items-center gap-1 overflow-hidden border-b border-black bg-[linear-gradient(#666666_5px,#333333_5px)] pl-[2px] text-[13px] leading-none text-[#777777]">
        <Icon name="nx" />
        <h1 className="whitespace-pre">NX 7 - 运动仿真 - [(仿真) motion_1.sim （修改的）]</h1>
      </header>

      <nav className="flex h-[27px] shrink-0 items-center border-y border-white pt-px">
        <Grip />
        <svg viewBox="0 0 18 18" className="size-[18px]" aria-hidden="true">
          <path d="M3 14V8l5-5 8 8" fill="none" stroke="#333" strokeWidth="4" />
          <path d="M3 13V8l5-5 7 8" fill="none" stroke="#eeee99" strokeWidth="2" />
          <path d="M0 13h17" stroke="#333" />
        </svg>
        <ul className="ml-1 flex gap-3">
          {menus.map(([t, k]) => (
            <li key={k}>
              <a href={"#" + k}>{t}(<u>{k}</u>)</a>
            </li>
          ))}
        </ul>
      </nav>

      <div className="flex h-[27px] shrink-0 items-center border-b border-white py-px">
        <Grip />
        <button className="ml-[3px] flex items-center gap-[3px]">
          <Icon name="nx" />
          开始
          <span className="border-x-3 border-t-3 border-x-transparent border-t-black" />
        </button>
        <span className="w-[2px] shrink-0" />
        <Tools pressed="ball" items="save | cut copy paste del | undo | box1 | box2 | bino _ : fit square zoomBox zoom rotate pan ortho | cube v ball section hex v sheet v white v | doorRed door doorStar _ : csys1 csys2 palette showHide hide pick eye | measure angle _" />
      </div>

      <div className="flex h-[27px] shrink-0 items-center border-b-2 border-[#999999] py-px">
        <Grip />
        <Tools items="part sketch |" />
        <button className="w-[23px] shrink-0 font-['Liberation_Serif',serif] text-[11px] italic text-[#555577]">f(x)</button>
        <Tools items="link joint gears v spring v damper v vector v forceBall v | arc | loop | blocks v | wave v | graph v | corner plate | anim v _ : square v magnet v square v gray3 left right refresh _ : gray3 first prev play next last pause stop down flag _ : newDoc record" />
      </div>

      <div className="flex h-[30px] shrink-0 items-center border-b border-white">
        <span className="w-1 shrink-0" />
        <FilterSelect label="没有选择过滤器" width="w-[144px]" />
        <span className="w-[7px] shrink-0" />
        <FilterSelect label="整个装配" width="w-[151px]" />
        <span className="w-[5px] shrink-0" />
        <Tools items="assembly | filter v swap blob point hook | marquee v | cubeRed" />
      </div>

      <div className="flex h-[21px] shrink-0 border-b border-[#999999]">
        <p className="w-[601px] border-r border-white pl-[2px] font-bold leading-[19px]">选择动画功能</p>
      </div>
      <div className="h-[17px] shrink-0 bg-[linear-gradient(#cccccc_5px,#999999_5px,#999999_6px,#cccccc_6px,#cccccc_9px,#ffffff_9px,#ffffff_10px,#cccccc_10px,#cccccc_13px,#666666_13px,#666666_14px,#999999_14px,#999999_15px,#666666_15px)]" />

      <main className="relative flex flex-1 flex-col border-b border-[#cccccc] bg-white">
        <div className="h-[210px] bg-[#99cccc]" />
        <div className="h-[352px] bg-[#cccccc]" />
        <div className="h-5 bg-[#ccccff]" />
        <div className="h-[3px] bg-[#ccffff]" />
        <div className="flex flex-1">
          <div className="w-[27px] bg-[#999999]" />
          <div className="w-2 border-r-2 border-[#666666] bg-white" />
        </div>
        <Model />
      </main>

      <footer className="flex h-[26px] shrink-0 items-center border-t-2 border-white">
        <Grip />
        <Tools items="wrench spanner | tree steps | folder nodes | check _" />
      </footer>

      <AnimationPanel />
      <GifWindow />
      <InputBar />
    </div>
  );
}
